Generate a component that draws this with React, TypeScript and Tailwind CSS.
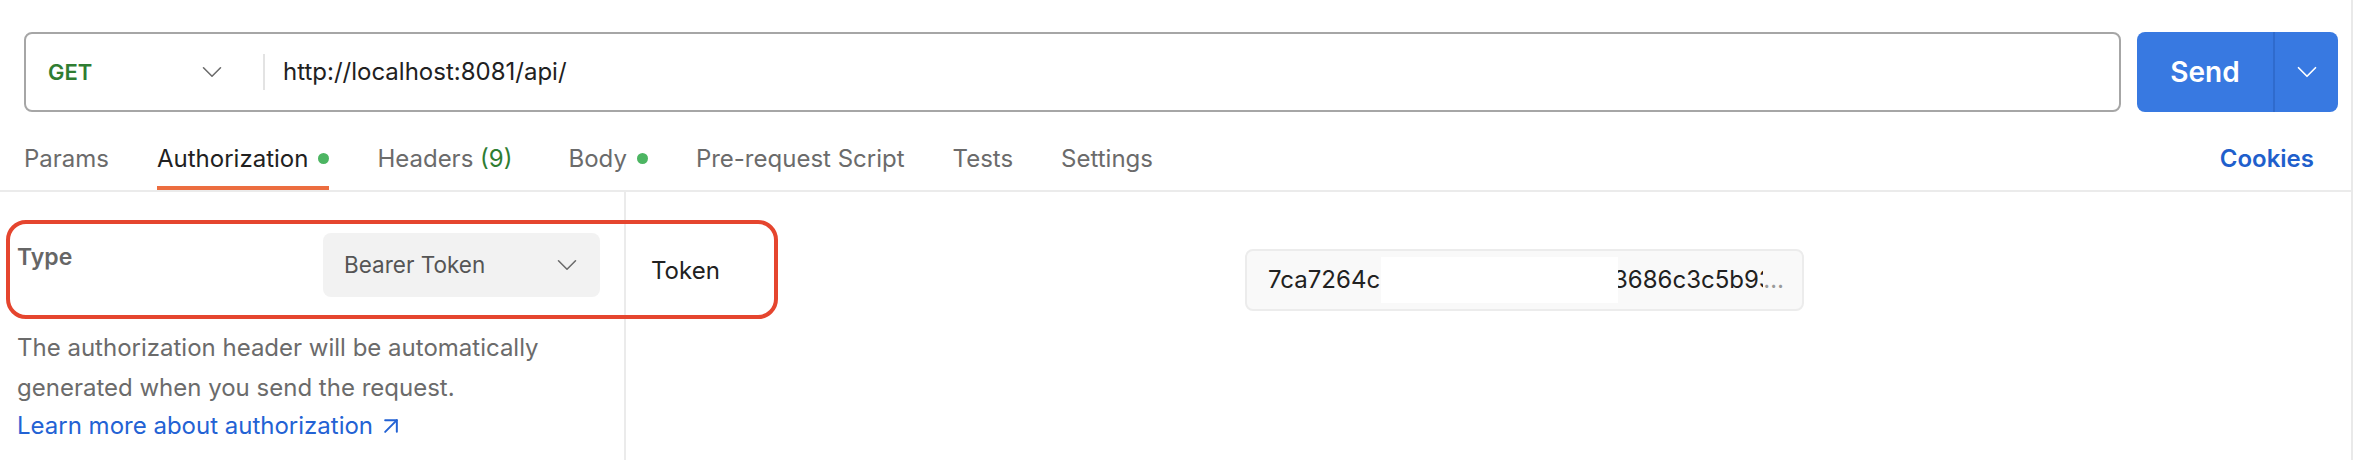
import { ChevronDown, ArrowUpRight } from "lucide-react";

const tabs = [
  { label: "Params" },
  { label: "Authorization", active: true, dot: true },
  { label: "Headers", count: "(9)" },
  { label: "Body", dot: true },
  { label: "Pre-request Script" },
  { label: "Tests" },
  { label: "Settings" },
];

function UrlBar() {
  return (
    <div className="flex items-center gap-4 pl-6 pr-[13px] pt-8">
      <div className="flex h-20 flex-1 items-center rounded-lg border-2 border-[#a6a6a6]">
        <div className="flex w-[237px] items-center justify-between pl-[22px] pr-[34px]">
          <span className="text-[22px] font-semibold text-[#2f7d32]">GET</span>
          <ChevronDown size={34} strokeWidth={1.1} className="text-[#6b6b6b]" />
        </div>
        <div className="h-9 w-[2px] bg-[#e3e3e3]" />
        <span className="pl-[18px] text-[24px] text-[#212121]">http://localhost:8081/api/</span>
      </div>
      <div className="flex h-20 w-[201px] overflow-hidden rounded-lg bg-[#3879e1] text-white">
        <div className="flex w-[136px] items-center justify-center text-[28px] font-semibold">Send</div>
        <div className="w-[2px] bg-[#2f6bcd]" />
        <div className="flex flex-1 items-center justify-center">
          <ChevronDown size={34} strokeWidth={1.2} />
        </div>
      </div>
    </div>
  );
}

function TabBar() {
  return (
    <div className="flex h-20 items-stretch border-b-2 border-[#ebebeb] pl-6 pr-[37px]">
      <div className="flex gap-[48px]">
        {tabs.map((t) => (
          <div
            key={t.label}
            className={`relative flex items-center gap-[10px] pt-[15px] ${t.count ? "pr-2" : ""}`}
          >
            <span className={`text-[24px] ${t.active ? "text-[#212121]" : "text-[#6b6b6b]"}`}>
              {t.label}
              {t.count && <span className="text-[#2f7d32]"> {t.count}</span>}
            </span>
            {t.dot && <span className="h-[11px] w-[11px] rounded-full bg-[#4cb562]" />}
            {t.active && <div className="absolute bottom-0 left-0 h-1 w-full bg-[#ec6d3f]" />}
          </div>
        ))}
      </div>
      <div className="ml-auto flex items-center pt-[15px] text-[24px] font-semibold text-[#1f5fcc]">
        Cookies
      </div>
    </div>
  );
}

function AuthPanel() {
  return (
    <div className="relative flex flex-1">
      <div className="w-[626px] border-r-2 border-[#ebebeb] pl-[17px] pr-[24px] pt-[41px]">
        <div className="flex items-start">
          <span className="mt-[8px] text-[23px] font-semibold leading-8 text-[#666666]">Type</span>
          <div className="ml-auto flex h-16 w-[277px] items-center justify-between rounded-lg bg-[#f2f2f2] pl-[21px] pr-[16px]">
            <span className="text-[22.5px] text-[#555555]">Bearer Token</span>
            <ChevronDown size={34} strokeWidth={1.1} className="text-[#6b6b6b]" />
          </div>
        </div>
        <p className="mt-[31px] text-[24px] leading-[40px] text-[#6b6b6b]">
          The authorization header will be automatically generated when you send the request.
        </p>
        <a className="flex items-center gap-1 text-[24px] leading-[36px] text-[#2362d4]">
          Learn more about authorization
          <ArrowUpRight size={28} strokeWidth={1.7} />
        </a>
      </div>
      <div className="flex flex-1 items-start pl-[25px] pt-[57px]">
        <span className="mt-[6px] w-[594px] text-[24px] leading-8 text-[#212121]">Token</span>
        <div className="flex h-[62px] w-[559px] items-center rounded-lg border-2 border-[#ececec] bg-[#f9f9f9] pl-[21px] pr-[18px] text-[24px] text-[#212121]">
          <span className="w-[113px] shrink-0 whitespace-nowrap">7ca7264c</span>
          <div className="relative z-10 h-[46px] w-[237px] shrink-0 bg-white" />
          <span className="-ml-[5px] min-w-0 flex-1 overflow-hidden whitespace-nowrap">3686c3c5b93a41f0e</span>
          <span className="text-[#9a9a9a]">…</span>
        </div>
      </div>
      {/* highlight annotation */}
      <div className="pointer-events-none absolute left-[6px] top-[28px] h-[99px] w-[772px] rounded-[20px] border-4 border-[#e5452e]" />
    </div>
  );
}

export default function App() {
  return (
    <div className="flex h-[460px] w-[2364px] bg-white font-['Inter',sans-serif]">
      <div className="flex w-[2353px] flex-col border-r-2 border-[#e9e9e9]">
        <UrlBar />
        <TabBar />
        <AuthPanel />
      </div>
    </div>
  );
}
